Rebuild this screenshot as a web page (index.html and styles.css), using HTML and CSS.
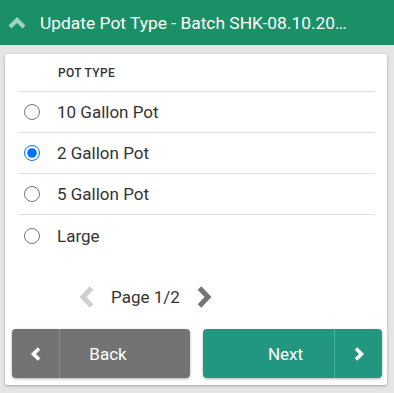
FILE: index.html
```html
<!DOCTYPE html>
<html>
<head>
<meta charset="utf-8">
<link rel="stylesheet" href="styles.css">
</head>
<body>
<div class="header">
  <svg class="hdr-icon" width="18" height="12" viewBox="0 0 18 12"><path d="M2 10 L9 3 L16 10" fill="none" stroke="#9fd6bd" stroke-width="4.2"/></svg>
  <span class="hdr-title">Update Pot Type - Batch SHK-08.10.20…</span>
</div>
<div class="card">
  <div class="list">
    <div class="list-head">POT TYPE</div>
    <label class="row"><input type="radio" name="pot" class="radio"><span>10 Gallon Pot</span></label>
    <label class="row"><input type="radio" name="pot" class="radio" checked><span>2 Gallon Pot</span></label>
    <label class="row"><input type="radio" name="pot" class="radio"><span>5 Gallon Pot</span></label>
    <label class="row last"><input type="radio" name="pot" class="radio"><span>Large</span></label>
  </div>
  <div class="pager">
    <svg class="pg-prev" width="15" height="22" viewBox="0 0 15 22"><path d="M12.5 2 L4 11 L12.5 20" fill="none" stroke="#cfcfcf" stroke-width="5"/></svg>
    <span class="pg-text">Page 1/2</span>
    <svg class="pg-next" width="15" height="22" viewBox="0 0 15 22"><path d="M2.5 2 L11 11 L2.5 20" fill="none" stroke="#757575" stroke-width="5"/></svg>
  </div>
  <div class="actions">
    <button class="btn btn-back">
      <span class="btn-icon"><svg width="12" height="14" viewBox="0 0 12 14"><path d="M9 1.5 L3.5 7 L9 12.5" fill="none" stroke="#fff" stroke-width="3.6"/></svg></span>
      <span class="btn-label">Back</span>
    </button>
    <button class="btn btn-next">
      <span class="btn-label">Next</span>
      <span class="btn-icon"><svg width="12" height="14" viewBox="0 0 12 14"><path d="M3 1.5 L8.5 7 L3 12.5" fill="none" stroke="#fff" stroke-width="3.6"/></svg></span>
    </button>
  </div>
</div>
</body>
</html>
```
FILE: styles.css
```css
* { box-sizing: border-box; }
html, body { margin: 0; padding: 0; }
body {
  background: #e5e5e5;
  font-family: Roboto, "Liberation Sans", sans-serif;
  width: 394px;
  height: 393px;
  overflow: hidden;
}
.header {
  height: 45px;
  background: #1b8f66;
  display: flex;
  align-items: center;
  padding-left: 8px;
  gap: 14px;
}
.hdr-icon { display: block; flex: none; margin-top: 1px; }
.hdr-title {
  color: #fff;
  font-size: 17.4px;
  white-space: nowrap;
}
.card {
  margin: 9px 7px 0 5px;
  height: 331px;
  background: #fff;
  border-radius: 2px;
  box-shadow: 0 1px 3px rgba(0,0,0,0.3);
  display: flex;
  flex-direction: column;
}
.list {
  padding: 0 12px 0 13px;
}
.list-head {
  height: 38px;
  padding: 12px 0 0 40px;
  font-size: 12px;
  font-weight: 500;
  color: #333;
  border-bottom: 1px solid #e0e0e0;
  letter-spacing: 0.3px;
}
.row {
  height: 41px;
  display: flex;
  align-items: center;
  border-bottom: 1px solid #e0e0e0;
  font-size: 17px;
  color: #333;
}
.row.last { border-bottom: none; }
.radio {
  margin: 0 17px 0 6px;
  width: 16px;
  height: 16px;
  flex: none;
}
.pager {
  display: flex;
  align-items: center;
  height: 30px;
  margin-top: 26px;
  padding-left: 74px;
}
.pg-prev { display: block; }
.pg-text {
  font-size: 17px;
  color: #333;
  margin: 0 17px 0 17px;
}
.pg-next { display: block; }
.actions {
  margin-top: 17px;
  padding: 0 5px 0 7px;
  display: grid;
  grid-template-columns: 178px 179px;
  column-gap: 13px;
}
.btn {
  height: 49px;
  border: none;
  border-radius: 4px;
  padding: 0;
  display: flex;
  align-items: stretch;
  color: #fff;
  font-family: inherit;
  font-size: 17px;
  box-shadow: 0 1px 3px rgba(0,0,0,0.3);
}
.btn-back { background: #737373; }
.btn-next { background: #21977f; }
.btn-icon {
  width: 48px;
  flex: none;
  display: flex;
  align-items: center;
  justify-content: center;
}
.btn-back .btn-icon { border-right: 1px solid #8c8c8c; }
.btn-next .btn-icon { border-left: 1px solid #4fb09c; }
.btn-label {
  flex: 1;
  display: flex;
  align-items: center;
  justify-content: center;
}
.btn-back .btn-label { padding-right: 34px; }
.btn-next .btn-label { padding-left: 34px; }
```
